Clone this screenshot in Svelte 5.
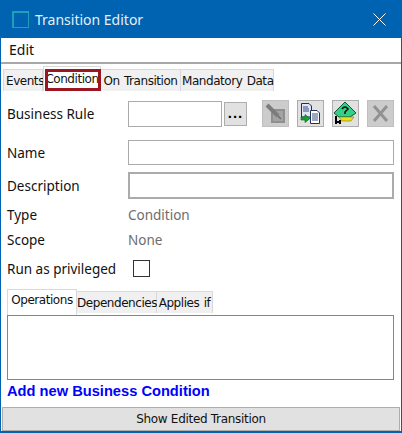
<script>
  const topTabs = ['Events', 'Condition', 'On Transition', 'Mandatory Data'];
  const innerTabs = ['Operations', 'Dependencies', 'Applies if'];
  let activeTop = 'Condition';
  let activeInner = 'Operations';
  let privileged = false;
</script>

<div class="window">
  <header class="titlebar">
    <span class="app-icon"></span>
    <span class="title">Transition Editor</span>
    <svg class="close" width="13" height="13" viewBox="0 0 13 13" fill="none" stroke="#fff" stroke-width="1">
      <path d="M0.5 0.5L12.5 12.5M12.5 0.5L0.5 12.5" />
    </svg>
  </header>

  <div class="menu">Edit</div>

  <div class="body">
    <div class="tabs top-tabs">
      {#each topTabs as tab}
        <button class="tab" class:active={tab === activeTop} on:click={() => (activeTop = tab)}>{tab}</button>
      {/each}
    </div>

    <div class="row rule-row">
      <span class="label">Business Rule</span>
      <input class="rule-input" type="text" />
      <button class="dots">...</button>
      <div class="tools">
        <button class="tool disabled" aria-label="Edit">
          <svg width="21" height="21" viewBox="0 0 21 21">
            <rect x="6" y="6" width="14" height="14" fill="#8f8f8f" />
            <rect x="8" y="8" width="10" height="10" fill="#a3a3a3" />
            <path d="M2 2L13 13" stroke="#7c7c7c" stroke-width="4" />
            <path d="M13 13L16 16" stroke="#6c6c6c" stroke-width="1.5" />
          </svg>
        </button>
        <button class="tool" aria-label="Copy">
          <svg width="21" height="21" viewBox="0 0 21 21">
            <path d="M1.5 0.5H9L11.5 3V14H1.5Z" fill="#dfe6f2" stroke="#1f2f55" />
            <path d="M3 4H8M3 6H9M3 8H9" stroke="#3b4d86" />
            <path d="M10.5 7.5H17L19.5 10V20.5H10.5Z" fill="#fff" stroke="#1f2f55" />
            <path d="M12 11H18M12 13H18M12 15H18M12 17H18" stroke="#3b4d86" />
            <path d="M1 14H5V11.5L10 15.5L5 19.5V17H1Z" fill="#0fa52f" stroke="#075a18" stroke-width="0.6" />
          </svg>
        </button>
        <button class="tool" aria-label="Check">
          <svg width="25" height="25" viewBox="0 0 25 25">
            <path d="M12 1L23 12L17 16H6L1 12Z" fill="#35cf85" stroke="#0b5a35" />
            <path d="M9 8Q12 4 15 8L12 11V13" fill="none" stroke="#111" stroke-width="1.6" />
            <path d="M6 16H21L18 20H9Z" fill="#e8e020" stroke="#7d7a10" stroke-width="0.6" />
            <path d="M3 15V23M3 21H8M7 19V23" stroke="#000" stroke-width="2" fill="none" />
          </svg>
        </button>
        <button class="tool disabled" aria-label="Delete">
          <svg width="21" height="21" viewBox="0 0 21 21">
            <path d="M4 3L17 18M17 3L4 18" stroke="#929292" stroke-width="3" />
          </svg>
        </button>
      </div>
    </div>

    <div class="row name-row">
      <span class="label">Name</span>
      <input class="field" type="text" />
    </div>
    <div class="row desc-row">
      <span class="label">Description</span>
      <input class="field thick" type="text" />
    </div>
    <div class="row type-row">
      <span class="label">Type</span>
      <span class="value">Condition</span>
    </div>
    <div class="row">
      <span class="label">Scope</span>
      <span class="value">None</span>
    </div>
    <div class="row priv-row">
      <span class="label">Run as privileged</span>
      <label class="check">
        <input type="checkbox" bind:checked={privileged} />
      </label>
    </div>

    <div class="tabs inner-tabs">
      {#each innerTabs as tab}
        <button class="tab" class:active={tab === activeInner} on:click={() => (activeInner = tab)}>{tab}</button>
      {/each}
    </div>
    <div class="tab-panel"></div>

    <a class="add-link" href="#add">Add new Business Condition</a>

    <button class="show-btn">Show Edited Transition</button>
  </div>
</div>

<style>
  :global(body) {
    margin: 0;
    background: #fff;
  }

  .window {
    width: 402px;
    height: 433px;
    box-sizing: border-box;
    display: flex;
    flex-direction: column;
    border: 1px solid #0063b1;
    border-bottom-width: 2px;
    font-family: "Noto Sans", "Open Sans", sans-serif;
    color: #111;
    background: #fff;
    overflow: hidden;
  }

  .titlebar {
    flex: none;
    height: 37px;
    display: flex;
    align-items: center;
    background: #0063b1;
    color: #e6eef7;
    font-size: 14px;
    padding: 0 15px 0 11px;
  }

  .app-icon {
    width: 14px;
    height: 14px;
    border: 1px solid #1aa3b8;
    border-left-width: 2px;
    border-top-width: 2px;
    margin-right: 6px;
    box-sizing: content-box;
  }

  .title {
    flex: 1;
  }

  .menu {
    flex: none;
    height: 24px;
    line-height: 24px;
    padding-left: 8px;
    font-size: 14px;
    border-bottom: 2px solid #a8a8a8;
    box-sizing: content-box;
  }

  .body {
    flex: 1;
    display: flex;
    flex-direction: column;
    padding: 2px 1px 0 1px;
    min-height: 0;
  }

  .tabs {
    display: flex;
    align-items: flex-end;
    font-family: "DejaVu Sans", sans-serif;
  }

  .tab {
    font: inherit;
    font-size: 12px;
    letter-spacing: -0.45px;
    word-spacing: 1px;
    color: #111;
    background: #f0f0f0;
    border: 1px solid #d9d9d9;
    border-bottom: none;
    border-left: none;
    padding: 0;
    height: 22px;
    text-align: center;
    white-space: nowrap;
  }

  .tab:first-child {
    border-left: 1px solid #d9d9d9;
  }

  .tab.active {
    background: #fff;
    height: 25px;
    border-left: 1px solid #d9d9d9;
  }

  .top-tabs {
    height: 25px;
    padding-left: 1px;
  }

  .top-tabs .tab:nth-child(1) { width: 40px; padding-left: 2px; }
  .top-tabs .tab:nth-child(2) { width: 58px; position: relative; }
  .top-tabs .tab:nth-child(3) { width: 80px; }
  .top-tabs .tab:nth-child(4) { width: 93px; padding-left: 1px; }

  /* red highlight laid over the selected tab */
  .top-tabs .tab.active::after {
    content: "";
    position: absolute;
    left: 1px;
    right: -1px;
    top: 2px;
    bottom: 0;
    border: 3px solid #9a1620;
    box-sizing: border-box;
  }

  .row {
    flex: none;
    display: flex;
    align-items: center;
    height: 25px;
    padding-left: 5px;
  }

  .rule-row {
    height: 27px;
    margin-top: 9px;
  }

  .name-row {
    margin-top: 13px;
  }

  .desc-row {
    height: 27px;
    margin-top: 7px;
  }

  .type-row {
    margin-top: 3px;
  }

  .priv-row {
    margin-top: 4px;
  }

  .label {
    width: 121px;
    flex: none;
    font-size: 13.5px;
    white-space: nowrap;
  }

  input[type="text"] {
    box-sizing: border-box;
    background: #fff;
    border: 1px solid #ababab;
    margin: 0;
    padding: 0;
    outline: none;
  }

  .rule-input {
    width: 94px;
    height: 26px;
  }

  .dots {
    width: 23px;
    height: 24px;
    margin-left: 2px;
    padding: 0 0 2px;
    font: bold 15px "Liberation Sans", sans-serif;
    letter-spacing: 1px;
    background: #e1e1e1;
    border: 1px solid #adadad;
  }

  .tools {
    display: flex;
    gap: 8px;
    margin-left: 15px;
  }

  .tool {
    width: 27px;
    height: 27px;
    padding: 0;
    display: flex;
    align-items: center;
    justify-content: center;
    background: #e1e1e1;
    border: 1px solid #adadad;
  }

  .tool.disabled {
    background: #cccccc;
    border-color: #bfbfbf;
  }

  .field {
    width: 266px;
    height: 25px;
  }

  .field.thick {
    height: 27px;
    border-width: 2px;
  }

  .value {
    font-size: 13.5px;
    color: #6d6d6d;
  }

  .check {
    display: flex;
    padding-left: 5px;
  }

  .check input {
    appearance: none;
    width: 17px;
    height: 17px;
    margin: 0;
    background: #fff;
    border: 1px solid #333;
  }

  .inner-tabs {
    flex: none;
    margin: 8px 0 0 5px;
    height: 26px;
  }

  .inner-tabs .tab {
    height: 22px;
    margin-bottom: 2px;
  }

  .inner-tabs .tab.active {
    height: 26px;
    margin-bottom: 0;
    padding-bottom: 5px;
  }

  .inner-tabs .tab:nth-child(1) { width: 70px; }
  .inner-tabs .tab:nth-child(2) { width: 80px; }
  .inner-tabs .tab:nth-child(3) { width: 56px; }

  .tab-panel {
    flex: none;
    box-sizing: border-box;
    width: 387px;
    height: 65px;
    margin-left: 5px;
    border: 1px solid #858585;
  }

  .add-link {
    flex: none;
    margin: 1px 0 0 5px;
    font: bold 14.67px "Liberation Sans", sans-serif;
    color: #0000ff;
    text-decoration: none;
    height: 20px;
    line-height: 20px;
  }

  .show-btn {
    flex: none;
    margin-top: auto;
    height: 24px;
    width: 398px;
    padding: 0;
    font-family: "DejaVu Sans", sans-serif;
    font-size: 12px;
    letter-spacing: -0.3px;
    color: #111;
    background: #e1e1e1;
    border: 1px solid #adadad;
  }
</style>
